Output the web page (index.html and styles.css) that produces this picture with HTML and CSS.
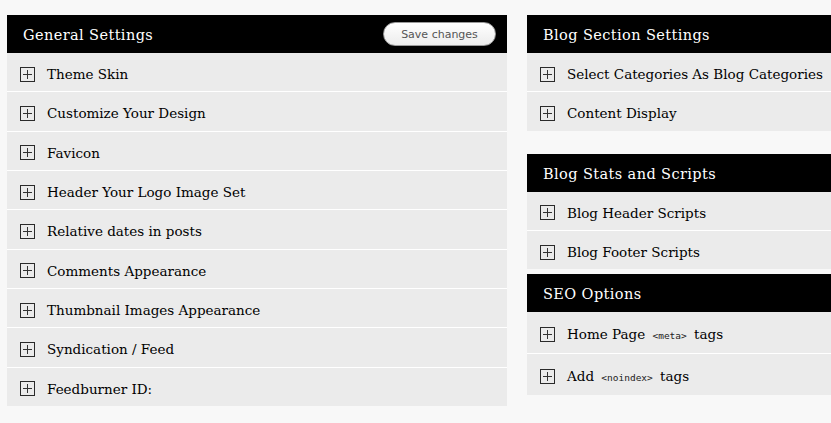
FILE: index.html
```html
<!DOCTYPE html>
<html>
<head>
<meta charset="utf-8">
<link rel="stylesheet" href="styles.css">
</head>
<body>
<div class="page">
  <div class="col col-left">
    <section class="panel">
      <header class="panel-head">
        <h2 class="panel-title">General Settings</h2>
        <button class="save-btn">Save changes</button>
      </header>
      <ul class="rows">
        <li class="row"><span class="plus"></span><span class="label">Theme Skin</span></li>
        <li class="row"><span class="plus"></span><span class="label">Customize Your Design</span></li>
        <li class="row"><span class="plus"></span><span class="label">Favicon</span></li>
        <li class="row"><span class="plus"></span><span class="label">Header Your Logo Image Set</span></li>
        <li class="row"><span class="plus"></span><span class="label">Relative dates in posts</span></li>
        <li class="row"><span class="plus"></span><span class="label">Comments Appearance</span></li>
        <li class="row"><span class="plus"></span><span class="label">Thumbnail Images Appearance</span></li>
        <li class="row"><span class="plus"></span><span class="label">Syndication / Feed</span></li>
        <li class="row"><span class="plus"></span><span class="label">Feedburner ID:</span></li>
      </ul>
    </section>
  </div>
  <div class="col col-right">
    <section class="panel panel-blog">
      <header class="panel-head"><h2 class="panel-title">Blog Section Settings</h2></header>
      <ul class="rows">
        <li class="row"><span class="plus"></span><span class="label">Select Categories As Blog Categories</span></li>
        <li class="row"><span class="plus"></span><span class="label">Content Display</span></li>
      </ul>
    </section>
    <section class="panel panel-stats">
      <header class="panel-head"><h2 class="panel-title">Blog Stats and Scripts</h2></header>
      <ul class="rows">
        <li class="row"><span class="plus"></span><span class="label">Blog Header Scripts</span></li>
        <li class="row"><span class="plus"></span><span class="label">Blog Footer Scripts</span></li>
      </ul>
    </section>
    <section class="panel panel-seo">
      <header class="panel-head"><h2 class="panel-title">SEO Options</h2></header>
      <ul class="rows">
        <li class="row row-tall"><span class="plus"></span><span class="label">Home Page <code class="code">&lt;meta&gt;</code> tags</span></li>
        <li class="row row-tall"><span class="plus"></span><span class="label">Add <code class="code">&lt;noindex&gt;</code> tags</span></li>
      </ul>
    </section>
  </div>
</div>
</body>
</html>
```
FILE: styles.css
```css
html, body {
  margin: 0;
  padding: 0;
  background: #f8f8f8;
  overflow: hidden;
}
.page {
  display: flex;
  gap: 20px;
  padding: 15px 0 0 7px;
  width: 860px;
  font-family: "DejaVu Serif", Georgia, serif;
}
.col-left { width: 500px; }
.col-right { width: 330px; display: flex; flex-direction: column; }
.panel-stats { margin-top: 23px; }
.panel-seo { margin-top: 4.5px; }
.panel-head {
  background: #000;
  height: 38px;
  display: flex;
  align-items: center;
  justify-content: space-between;
  padding: 0 11px 0 16px;
}
.panel-title {
  margin: 0;
  padding-top: 2px;
  color: #fff;
  font-weight: normal;
  font-size: 14.5px;
  letter-spacing: 0.4px;
}
.save-btn {
  width: 113px;
  height: 24px;
  border-radius: 12px;
  border: 1px solid #9a9a9a;
  background: linear-gradient(#ffffff, #ececec);
  font-family: "DejaVu Sans", Verdana, sans-serif;
  font-size: 11px;
  color: #555;
  padding: 0;
}
.rows { list-style: none; margin: 0; padding: 0; }
.row {
  background: #ebebeb;
  height: 34.33px;
  padding-top: 4px;
  border-bottom: 1px solid #fff;
  display: flex;
  align-items: center;
  padding-left: 13px;
  box-sizing: content-box;
}
.row:last-child { border-bottom: none; }
.row-tall { height: 37px; }
.plus {
  width: 13px;
  height: 13px;
  border: 1px solid #2a2a2a;
  position: relative;
  margin-right: 12px;
  flex: none;
}
.plus::before, .plus::after {
  content: "";
  position: absolute;
  background: #333;
}
.plus::before { left: 2px; right: 2px; top: 6px; height: 1px; }
.plus::after { top: 2px; bottom: 2px; left: 6px; width: 1px; }
.label {
  font-size: 13.5px;
  color: #000;
  white-space: nowrap;
}
.code {
  font-family: "DejaVu Sans Mono", Consolas, monospace;
  font-size: 9.5px;
  color: #222;
  margin: 0 3px;
}
```
